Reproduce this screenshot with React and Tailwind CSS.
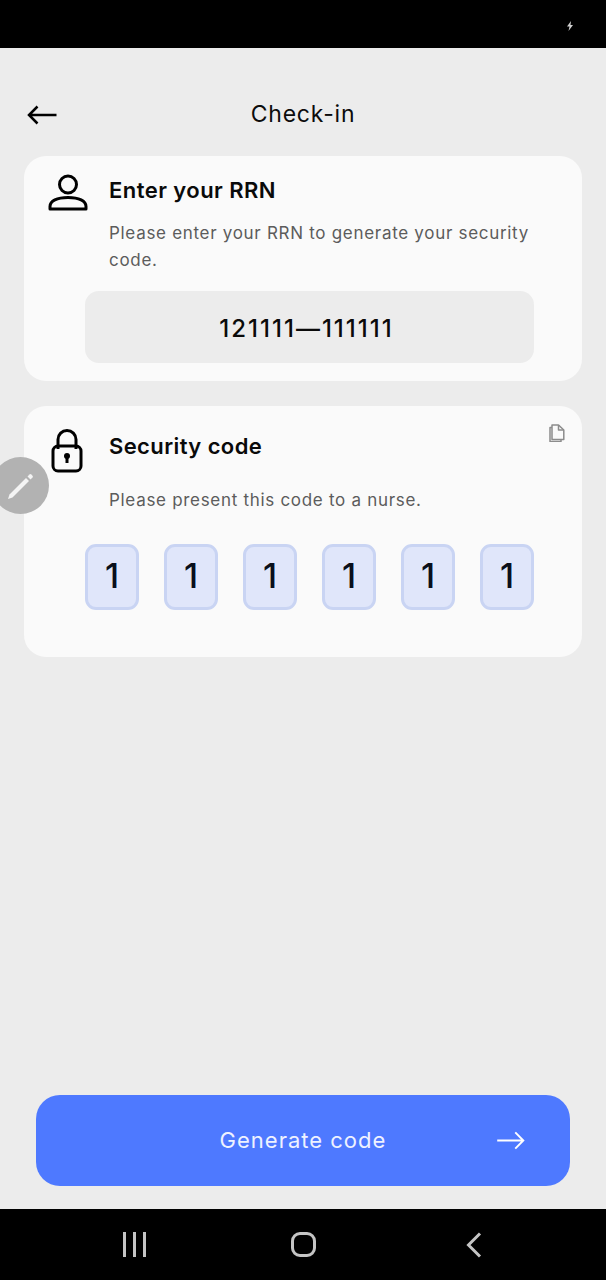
const DIGITS = ['1', '1', '1', '1', '1', '1'];

function UserIcon() {
  return (
    <svg width="40" height="40" viewBox="0 0 40 40" fill="none" stroke="#000" strokeWidth="3">
      <circle cx="20" cy="11.500" r="8.500" />
      <path d="M2 36v-2.500c0-5.500 7-9 18-9s18 3.500 18 9V36z" strokeLinejoin="round" />
    </svg>
  );
}

function LockIcon() {
  return (
    <svg width="32" height="44" viewBox="0 0 32 44" fill="none">
      <path d="M7 20V10.500a9 9 0 0 1 18 0V20" stroke="#000" strokeWidth="3" />
      <rect x="2" y="17" width="28" height="25" rx="5" stroke="#000" strokeWidth="3" />
      <circle cx="16" cy="27" r="3" fill="#000" />
      <rect x="14.500" y="27" width="3" height="7" fill="#000" />
    </svg>
  );
}

function CopyIcon() {
  return (
    <svg width="16" height="18" viewBox="0 0 16 18" fill="none" stroke="#8c8c8c" strokeWidth="1.500" strokeLinejoin="round">
      <path d="M3 1h6.500L14.800 6v9.500H3z" />
      <path d="M9.500 1v5h5.300" />
      <path d="M3 3.500H1v14h11v-2" />
    </svg>
  );
}

function PencilIcon() {
  return (
    <svg width="28" height="28" viewBox="0 0 28 28" fill="#f4f4f4">
      <path d="M1 27l1.500-4.500L19 6l3 3L5.500 25.500z" />
      <path d="M20.500 4.500l2-2a1.300 1.300 0 0 1 1.800 0l1.200 1.200a1.300 1.300 0 0 1 0 1.800l-2 2z" />
    </svg>
  );
}

function Arrow({ color, flip, width, height, strokeWidth }) {
  return (
    <svg width={width} height={height} viewBox="0 0 30 20" fill="none" stroke={color} strokeWidth={strokeWidth} className={flip ? 'rotate-180' : ''}>
      <path d="M1 10h28M10 1.500L1.500 10l8.500 8.500" />
    </svg>
  );
}

export default function App() {
  return (
    <div className="relative flex h-[1280px] w-[606px] flex-col overflow-hidden bg-black font-['Inter',sans-serif]">
      <div className="flex h-12 shrink-0 items-center justify-end pr-8">
        <svg width="8" height="10" viewBox="0 0 8 10" fill="#cfcfcf" className="mt-1">
          <path d="M5 0L1 5.500h2.500L2.500 10 7 4H4.500z" />
        </svg>
      </div>

      <main className="flex min-h-0 flex-1 flex-col bg-[#ececec] px-6">
        <header className="relative mt-[50px] flex h-8 shrink-0 items-center justify-center">
          <div className="absolute left-[3px] top-[7px]">
            <Arrow color="#000" width={31} height={20} strokeWidth={2.500} />
          </div>
          <h1 className="text-[23px] font-normal tracking-[0.8px] text-[#0c0c0c]">Check-in</h1>
        </header>

        <section className="mt-[26px] h-[225px] shrink-0 rounded-[22px] bg-[#fafafa] pl-6 pr-12 pt-[17px]">
          <div className="flex">
            <div className="mr-[21px] shrink-0">
              <UserIcon />
            </div>
            <div className="pt-[3px]">
              <h2 className="text-[22px] font-semibold leading-[28px] tracking-[0.45px] text-[#0a0a0a]">Enter your RRN</h2>
              <p className="mt-[16px] text-[17px] leading-[26.500px] tracking-[0.7px] text-[#5c5c5c]">
                Please enter your RRN to generate your security code.
              </p>
            </div>
          </div>
          <div className="ml-[37px] mt-[18px] flex h-[72px] items-center justify-center rounded-[14px] bg-[#ececec] pr-[6px] pt-[3px] text-[24px] font-medium tracking-[2px] text-[#0a0a0a]">
            121111—111111
          </div>
        </section>

        <section className="relative mt-[25px] h-[251px] shrink-0 rounded-[22px] bg-[#fafafa] pl-[61px] pr-12 pt-[26px]">
          <div className="absolute left-[27px] top-[23px]">
            <LockIcon />
          </div>
          <div className="absolute right-[17px] top-[18px]">
            <CopyIcon />
          </div>
          <h2 className="ml-6 text-[22px] font-semibold leading-[28px] tracking-[0.4px] text-[#0a0a0a]">Security code</h2>
          <p className="ml-6 mt-[27px] text-[17px] leading-[27px] tracking-[0.7px] text-[#5c5c5c]">
            Please present this code to a nurse.
          </p>
          <div className="mt-[30px] flex justify-between">
            {DIGITS.map((digit, i) => (
              <div
                key={i}
                className="flex h-[66px] w-[54px] items-center justify-center rounded-[11px] border-[3px] border-[#c9d4f3] bg-[#e0e6fa] pb-[3px] text-[34px] font-medium text-[#0a0f1a]"
              >
                {digit}
              </div>
            ))}
          </div>
        </section>

        <button
          type="button"
          className="relative mx-3 mb-[23px] mt-auto flex h-[91px] shrink-0 items-center justify-center rounded-[24px] bg-[#4e79ff] text-[22px] tracking-[1px] text-[#eef2ff]"
        >
          Generate code
          <span className="absolute right-[45px] top-[36px]">
            <Arrow color="#fff" flip width={29} height={19} strokeWidth={2} />
          </span>
        </button>
      </main>

      <nav className="grid h-[71px] shrink-0 grid-cols-3 items-center pl-[33px] pr-[33px]">
        <div className="flex justify-center gap-[7px] pl-[22px]">
          <span className="h-[25px] w-[3px] bg-[#c4c4c4]" />
          <span className="h-[25px] w-[3px] bg-[#c4c4c4]" />
          <span className="h-[25px] w-[3px] bg-[#c4c4c4]" />
        </div>
        <div className="flex justify-center">
          <span className="h-[25px] w-[25px] rounded-[9px] border-[3px] border-[#c4c4c4]" />
        </div>
        <div className="flex justify-center pr-[19px]">
          <svg width="16" height="26" viewBox="0 0 16 26" fill="none" stroke="#c4c4c4" strokeWidth="3">
            <path d="M14 1.500L2.500 13 14 24.500" />
          </svg>
        </div>
      </nav>

      <div className="absolute left-[-8px] top-[457px] flex h-[57px] w-[57px] items-center justify-center rounded-full bg-[#b2b2b2]">
        <span className="ml-[1px]">
          <PencilIcon />
        </span>
      </div>
    </div>
  );
}
